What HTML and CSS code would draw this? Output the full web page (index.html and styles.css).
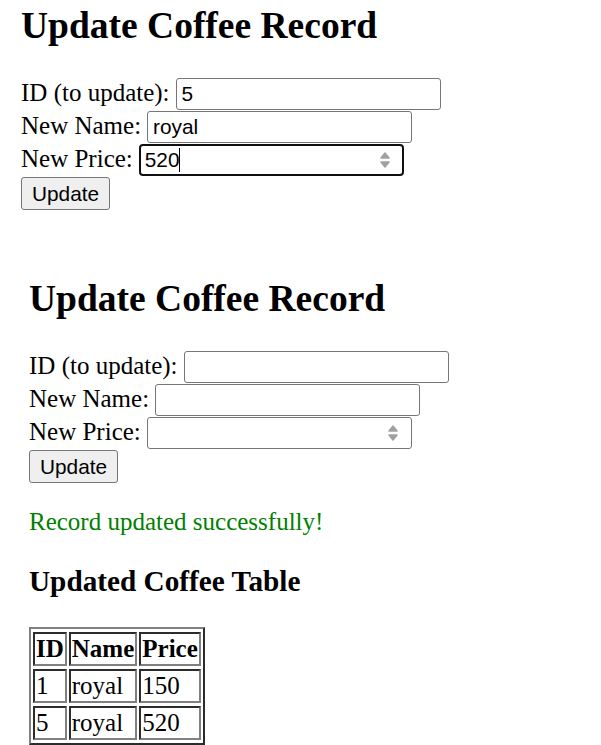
FILE: index.html
```html
<!DOCTYPE html>
<html lang="en">
	<head>
		<title>Update Coffee Record</title>
		<meta charset="UTF-8">
		<link rel="stylesheet" href="styles.css">
	</head>
	<body>
		<!-- formulaire avant l'envoi -->
		<div class="panel panelFirst">
			<h2>Update Coffee Record</h2>
			<form class="updateForm" name="formBefore">
				<div class="formRow">
					<label for="id1">ID (to update):</label>
					<input class="formTextField" id="id1" type="text" value="5">
				</div>
				<div class="formRow">
					<label for="name1">New Name:</label>
					<input class="formTextField" id="name1" type="text" value="royal">
				</div>
				<div class="formRow">
					<label for="price1">New Price:</label>
					<span class="spinField">
						<input class="formTextField numberField isFocused" id="price1" type="number" value="520">
						<span class="textCaret"></span>
						<svg class="spinArrows" width="16" height="20" viewBox="0 0 16 20"><path d="M4 8 L8 3 L12 8 Z M4 12 L8 17 L12 12 Z"/></svg>
					</span>
				</div>
				<div class="formRow">
					<input class="buttonSubmit" type="submit" value="Update">
				</div>
			</form>
		</div>

		<!-- resultat apres la mise a jour -->
		<div class="panel panelSecond">
			<h2>Update Coffee Record</h2>
			<form class="updateForm" name="formAfter">
				<div class="formRow">
					<label for="id2">ID (to update):</label>
					<input class="formTextField" id="id2" type="text">
				</div>
				<div class="formRow">
					<label for="name2">New Name:</label>
					<input class="formTextField" id="name2" type="text">
				</div>
				<div class="formRow">
					<label for="price2">New Price:</label>
					<span class="spinField">
						<input class="formTextField numberField" id="price2" type="number">
						<svg class="spinArrows" width="16" height="20" viewBox="0 0 16 20"><path d="M4 8 L8 3 L12 8 Z M4 12 L8 17 L12 12 Z"/></svg>
					</span>
				</div>
				<div class="formRow">
					<input class="buttonSubmit" type="submit" value="Update">
				</div>
			</form>
			<p class="successMsg">Record updated successfully!</p>
			<h3>Updated Coffee Table</h3>
			<table class="coffeeTable">
				<tr><th>ID</th><th>Name</th><th>Price</th></tr>
				<tr><td>1</td><td>royal</td><td>150</td></tr>
				<tr><td>5</td><td>royal</td><td>520</td></tr>
			</table>
		</div>
	</body>
</html>
```

FILE: styles.css
```css
body {
	margin : 0;
	font-family : "Liberation Serif", "Times New Roman", serif;
	font-size : 25px;
	color : #000;
	background-color : #fff;
}
h2 {
	margin : 0 0 31px 0;
	font-size : 37.5px;
	font-weight : bold;
}
h3 {
	margin : 29px 0;
	font-size : 29.25px;
	font-weight : bold;
}

.panel {
	padding-left : 21px;
}
.panelFirst {
	padding-top : 4px;
}
.panelSecond {
	margin-top : 67px;
	padding-left : 29px;
}

.updateForm {
	margin : 0;
}
.formRow {
	display : flex;
	align-items : baseline;
	gap : 6px;
	height : 33px;
}
.formTextField {
	box-sizing : border-box;
	width : 265px;
	height : 32px;
	margin : 0;
	padding : 1px 5px;
	border : 1px solid #767676;
	border-radius : 3px;
	background-color : #fff;
	font-family : "Liberation Sans", Arial, sans-serif;
	font-size : 20.8px;
	color : #000;
	outline-style : none;
}
.numberField {
	-moz-appearance : textfield;
	appearance : textfield;
}
.numberField::-webkit-inner-spin-button,
.numberField::-webkit-outer-spin-button {
	-webkit-appearance : none;
	margin : 0;
}
.isFocused {
	border : 2px solid #101010;
	border-radius : 4px;
	padding-left : 4px;
}
.spinField {
	position : relative;
	display : inline-block;
}
.spinArrows {
	position : absolute;
	right : 11px;
	top : 6px;
	fill : #a0a0a0;
	stroke : #a0a0a0;
	stroke-width : 1.5;
	stroke-linejoin : round;
}
.textCaret {
	position : absolute;
	left : 40px;
	top : 4px;
	width : 1.5px;
	height : 24px;
	background-color : #000;
}
.buttonSubmit {
	box-sizing : border-box;
	height : 33px;
	margin : 0;
	padding : 0 10px;
	border : 1px solid #767676;
	border-radius : 3px;
	background-color : #efefef;
	font-family : "Liberation Sans", Arial, sans-serif;
	font-size : 20.8px;
	color : #000;
}

.successMsg {
	margin : 25px 0;
	color : #008000;
}

.coffeeTable {
	border : 2px outset #808080;
	border-spacing : 2px 3px;
}
.coffeeTable th,
.coffeeTable td {
	border : 2px inset #808080;
	padding : 1px;
	text-align : left;
}
.coffeeTable th {
	text-align : center;
	font-weight : bold;
}
```
